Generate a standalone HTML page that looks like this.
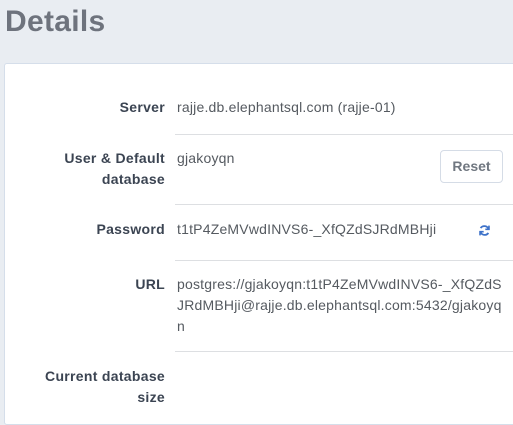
<!DOCTYPE html>
<html><head><style>
body{margin:0;width:513px;height:410px;overflow:hidden;background:#e9edf2;font-family:"Liberation Sans",sans-serif;position:relative}
h1{position:absolute;left:5px;top:5px;margin:0;font-size:30px;font-weight:bold;color:#6e737d;letter-spacing:0.3px}
.card{position:absolute;left:4px;top:63px;width:520px;height:360px;background:#fff;border:1px solid #d5deea;border-radius:3px}
.l{position:absolute;right:348px;text-align:right;font-weight:bold;font-size:14px;color:#3b4452;line-height:21px;letter-spacing:0.3px}
.v{position:absolute;left:177px;font-size:14px;color:#555a60;line-height:21px;letter-spacing:0.2px}
.hr{position:absolute;left:175px;right:0;height:1px;background:#dddfe2}
.btn{position:absolute;left:440px;top:150px;width:63px;height:33px;box-sizing:border-box;border:1px solid #d5dce6;border-radius:4px;font-size:14px;font-weight:bold;color:#707780;text-align:center;line-height:31px}
</style></head><body>
<h1>Details</h1>
<div class="card"></div>
<div class="l" style="top:97px">Server</div>
<div class="v" style="top:97px">rajje.db.elephantsql.com (rajje-01)</div>
<div class="hr" style="top:134px"></div>
<div class="l" style="top:148px">User &amp; Default<br>database</div>
<div class="v" style="top:148px">gjakoyqn</div>
<div class="btn">Reset</div>
<div class="hr" style="top:204px"></div>
<div class="l" style="top:219px">Password</div>
<div class="v" style="top:219px">t1tP4ZeMVwdINVS6-_XfQZdSJRdMBHji</div>
<svg style="position:absolute;left:478px;top:224px" width="13" height="13" viewBox="0 0 16 16" fill="none" stroke="#3d72c9" stroke-width="2.2"><path d="M13 6.5A5.5 5.5 0 0 0 3.2 5"/><path d="M3 9.5A5.5 5.5 0 0 0 12.8 11"/><path d="M13.5 2v4.5H9" stroke-width="2"/><path d="M2.5 14V9.5H7" stroke-width="2"/></svg>
<div class="hr" style="top:260px"></div>
<div class="l" style="top:274px">URL</div>
<div class="v" style="top:274px;width:340px;white-space:nowrap">postgres://gjakoyqn:t1tP4ZeMVwdINVS6-_XfQZdS<br>JRdMBHji@rajje.db.elephantsql.com:5432/gjakoyq<br>n</div>
<div class="hr" style="top:351px"></div>
<div class="l" style="top:366px">Current database<br>size</div>
</body></html>
